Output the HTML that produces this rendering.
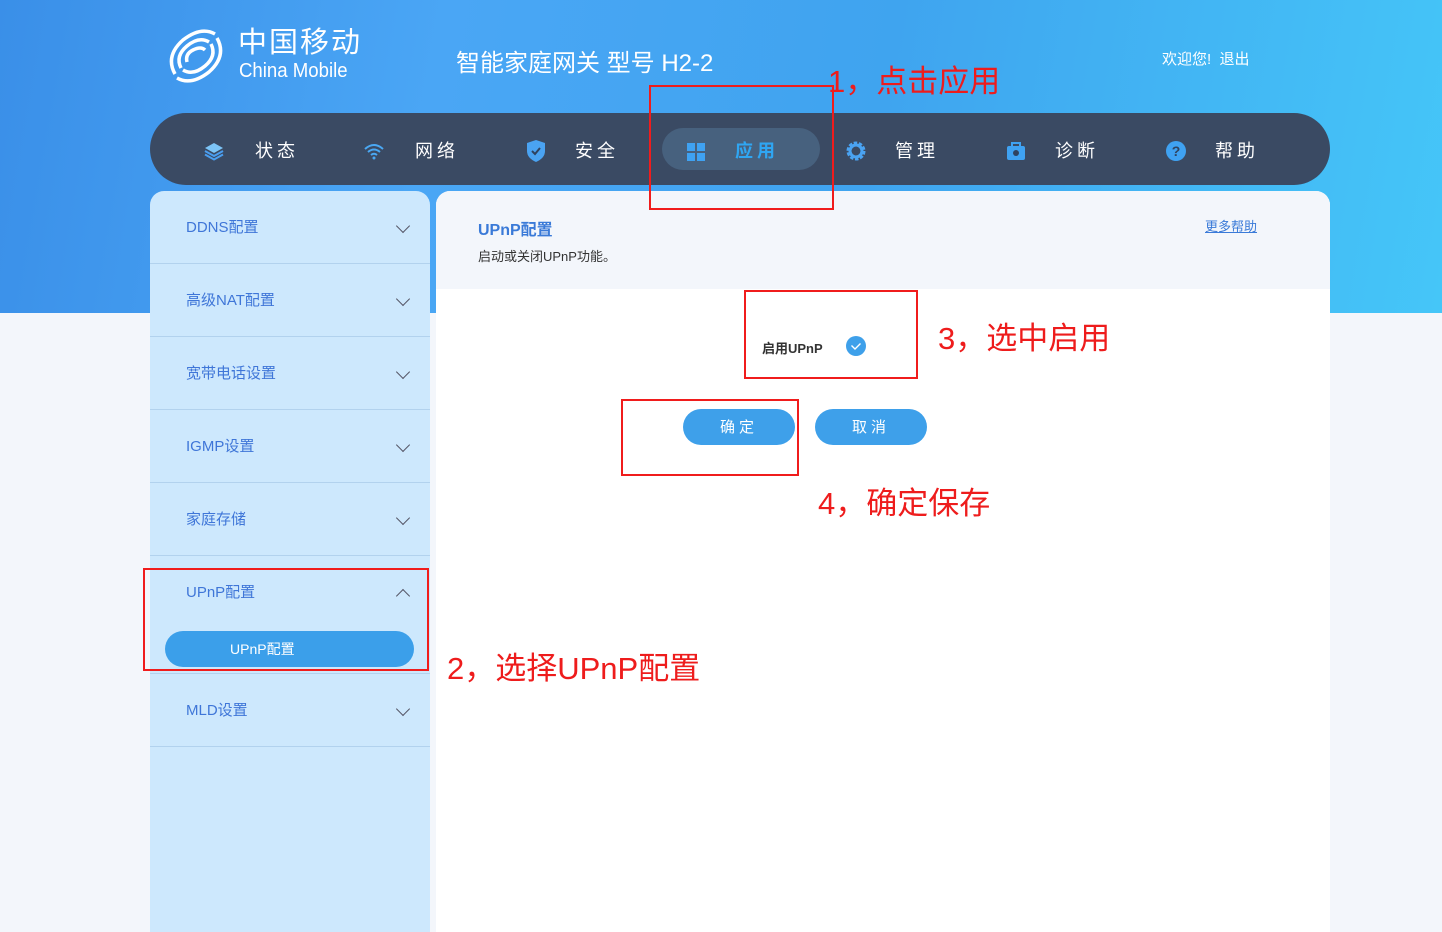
<!DOCTYPE html>
<html><head><meta charset="utf-8"><style>
*{margin:0;padding:0;box-sizing:border-box}
body{width:1442px;height:932px;overflow:hidden;position:relative;background:#f3f6fb;font-family:"Liberation Sans","Noto Sans CJK SC",sans-serif}
.top{position:absolute;left:0;top:0;width:1442px;height:313px;background:linear-gradient(100deg,#3a8fe8 0%,#4aa6f5 30%,#3fa4ef 60%,#45c6f8 100%)}
.abs{position:absolute}
.nav{left:150px;top:113px;width:1180px;height:72px;background:#3a4a63;border-radius:36px}
.ni{position:absolute;top:2px;height:72px;line-height:72px;color:#fff;font-size:18px;letter-spacing:4px}
.ic{position:absolute;top:28px;width:20px;height:20px}
.side{left:150px;top:191px;width:280px;height:741px;background:#cde8fd;border-radius:14px 14px 0 0}
.si{position:absolute;left:0;width:280px;height:73px;border-bottom:1px solid #b2d2ee;color:#3f76d8;font-size:15px;line-height:73px;padding-left:36px}
.chev{position:absolute;right:22px;top:30px;width:10px;height:10px;border-right:1.5px solid #556;border-bottom:1.5px solid #556;transform:rotate(45deg)}
.main{left:436px;top:191px;width:894px;height:741px;background:#fff;border-radius:14px 14px 0 0;overflow:hidden}
.red{position:absolute;border:2px solid #f01c1c}
.ann{position:absolute;color:#ee1c1c;font-size:31px;white-space:nowrap}
.btn{position:absolute;top:409px;width:112px;height:36px;border-radius:18px;background:#3ea0ea;color:#fff;font-size:15px;text-align:center;line-height:38px;letter-spacing:4px}
</style></head><body>
<div class="top"></div>
<svg class="abs" style="left:165px;top:26px" width="62" height="60" viewBox="0 0 62 60"><g fill="none" stroke="#fff" stroke-width="3.5"><path d="M10 48 Q0 30 18 14 Q36 0 50 8"/><path d="M52 12 Q62 30 44 46 Q26 60 12 52"/><path d="M16 42 Q10 30 22 20 Q34 10 44 16"/><path d="M46 18 Q52 30 40 40 Q28 50 18 44"/><path d="M22 36 Q20 28 28 24 Q36 20 40 24"/></g></svg>
<div class="abs" style="left:238px;top:28px;color:#fff;font-size:29px;line-height:30px;letter-spacing:2px">中国移动</div>
<div class="abs" style="left:239px;top:61px;color:#fff;font-size:20px;line-height:20px;transform:scaleX(.93);transform-origin:left">China Mobile</div>
<div class="abs" style="left:456px;top:43px;color:#fff;font-size:24px">智能家庭网关 型号 H2-2</div>
<div class="abs" style="left:1162px;top:48px;color:#fff;font-size:15px">欢迎您!&nbsp; 退出</div>
<div class="abs nav">
 <svg class="ic" style="left:54px" viewBox="0 0 20 20"><path d="M10 2 19 7 10 12 1 7Z" fill="#7cc4f7"/><path d="M1 10 10 15 19 10" stroke="#4a9ef0" stroke-width="2" fill="none"/><path d="M1 13.5 10 18.5 19 13.5" stroke="#4a9ef0" stroke-width="2" fill="none"/></svg>
 <div class="ni" style="left:105px">状态</div>
 <svg class="ic" style="left:214px" viewBox="0 0 20 20"><g fill="none" stroke="#4aa8f3" stroke-width="2"><path d="M1 8Q10 0 19 8"/><path d="M4 11Q10 6 16 11"/><path d="M7 14Q10 11.5 13 14"/></g><circle cx="10" cy="17" r="1.5" fill="#4aa8f3"/></svg>
 <div class="ni" style="left:265px">网络</div>
 <svg class="ic" style="left:376px;top:27px;height:22px" viewBox="0 0 20 22"><path d="M10 0 19 3V11Q19 18 10 22 1 18 1 11V3Z" fill="#4aa3f2"/><path d="M6 11 9 14 14 8" stroke="#2f4360" stroke-width="2" fill="none"/></svg>
 <div class="ni" style="left:425px">安全</div>
 <div class="abs" style="left:512px;top:15px;width:158px;height:42px;border-radius:21px;background:#47617e"></div>
 <svg class="ic" style="left:536px;top:29px" viewBox="0 0 20 20"><g fill="#3fa2f2"><rect x="1" y="1" width="8" height="8"/><rect x="11" y="1" width="8" height="8"/><rect x="1" y="11" width="8" height="8"/><rect x="11" y="11" width="8" height="8"/></g></svg>
 <div class="ni" style="left:585px;color:#2fa6f3;font-weight:bold">应用</div>
 <svg class="ic" style="left:696px" viewBox="0 0 20 20"><circle cx="10" cy="10" r="7" fill="none" stroke="#4aa3f2" stroke-width="5" stroke-dasharray="3 1.4"/><circle cx="10" cy="10" r="6" fill="none" stroke="#4aa3f2" stroke-width="3"/></svg>
 <div class="ni" style="left:745px">管理</div>
 <svg class="ic" style="left:856px" viewBox="0 0 20 20"><rect x="1" y="5" width="18" height="14" rx="2" fill="#3fa2f2"/><rect x="6" y="2" width="8" height="4" fill="none" stroke="#3fa2f2" stroke-width="2"/><circle cx="10" cy="12" r="3" fill="#2f4360"/></svg>
 <div class="ni" style="left:905px">诊断</div>
 <svg class="ic" style="left:1016px" viewBox="0 0 20 20"><circle cx="10" cy="10" r="10" fill="#3fa2f2"/><text x="10" y="15" font-size="14" font-weight="bold" fill="#2f4360" text-anchor="middle" font-family="Liberation Sans">?</text></svg>
 <div class="ni" style="left:1065px">帮助</div>
</div>
<div class="abs side">
 <div class="si" style="top:0">DDNS配置<span class="chev"></span></div>
 <div class="si" style="top:73px">高级NAT配置<span class="chev"></span></div>
 <div class="si" style="top:146px">宽带电话设置<span class="chev"></span></div>
 <div class="si" style="top:219px">IGMP设置<span class="chev"></span></div>
 <div class="si" style="top:292px">家庭存储<span class="chev"></span></div>
 <div class="si" style="top:365px;height:118px;line-height:73px">UPnP配置<span class="chev" style="transform:rotate(225deg);top:35px"></span>
  <div class="abs" style="left:15px;top:75px;width:249px;height:36px;border-radius:18px;background:#3b9fea;color:#fff;font-size:14px;line-height:36px;padding-left:65px">UPnP配置</div></div>
 <div class="si" style="top:483px">MLD设置<span class="chev"></span></div>
</div>
<div class="abs main">
 <div class="abs" style="left:0;top:0;width:894px;height:98px;background:#f3f6fb"></div>
 <div class="abs" style="left:42px;top:25px;color:#3a7ad8;font-size:16px;font-weight:bold">UPnP配置</div>
 <div class="abs" style="left:42px;top:55px;color:#333;font-size:13px">启动或关闭UPnP功能。</div>
 <div class="abs" style="left:769px;top:25px;color:#3a7ad8;font-size:13px;text-decoration:underline">更多帮助</div>
 <div class="abs" style="left:326px;top:147px;color:#333;font-size:13px;font-weight:bold">启用UPnP</div>
 <svg class="abs" style="left:410px;top:145px" width="20" height="20"><circle cx="10" cy="10" r="10" fill="#3ea0ea"/><path d="M5.5 9.5 9 13 14.5 7.5" stroke="#fff" stroke-width="1.4" fill="none"/></svg>
</div>
<div class="btn" style="left:683px">确定</div>
<div class="btn" style="left:815px">取消</div>
<div class="red" style="left:649px;top:85px;width:185px;height:125px"></div>
<div class="red" style="left:744px;top:290px;width:174px;height:89px"></div>
<div class="red" style="left:621px;top:399px;width:178px;height:77px"></div>
<div class="red" style="left:143px;top:568px;width:286px;height:103px"></div>
<div class="ann" style="left:828px;top:56px">1，点击应用</div>
<div class="ann" style="left:938px;top:313px">3，选中启用</div>
<div class="ann" style="left:818px;top:478px">4，确定保存</div>
<div class="ann" style="left:447px;top:643px">2，选择UPnP配置</div>
</body></html>
